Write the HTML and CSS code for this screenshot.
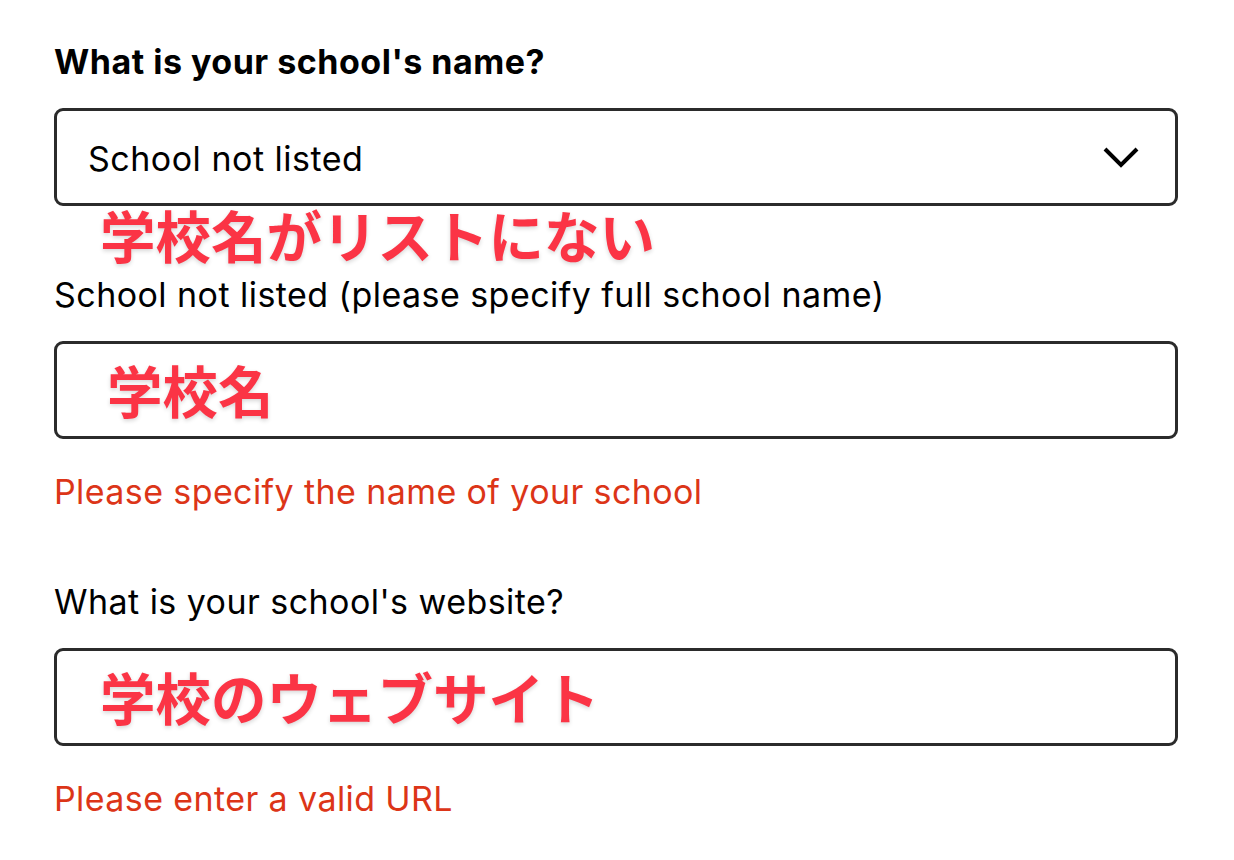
FILE: index.html
```html
<!DOCTYPE html>
<html lang="en">
<head>
<meta charset="utf-8">
<title>School details</title>
<link rel="stylesheet" href="styles.css">
</head>
<body>
<main class="form">
  <section class="field">
    <label class="label label--bold">What is your school's name?</label>
    <div class="control control--select">
      <span class="value">School not listed</span>
      <svg class="chevron" width="36" height="22" viewBox="0 0 36 22" aria-hidden="true">
        <polyline points="2,3 18,19 34,3" fill="none" stroke="#000" stroke-width="4"/>
      </svg>
    </div>
    <div class="note note--below">学校名がリストにない</div>
  </section>

  <section class="field field--other">
    <label class="label">School not listed (please specify full school name)</label>
    <div class="control">
      <span class="note note--inside note--indent">学校名</span>
    </div>
    <p class="error">Please specify the name of your school</p>
  </section>

  <section class="field field--website">
    <label class="label">What is your school's website?</label>
    <div class="control">
      <span class="note note--inside">学校のウェブサイト</span>
    </div>
    <p class="error">Please enter a valid URL</p>
  </section>
</main>
</body>
</html>
```

FILE: styles.css
```css
html, body {
  margin: 0;
  padding: 0;
  background: #ffffff;
}

body {
  font-family: Inter, "Liberation Sans", Arial, sans-serif;
  color: #000000;
}

.form {
  width: 1124px;
  padding: 40px 0 0 54px;
  display: flex;
  flex-direction: column;
}

.field {
  display: flex;
  flex-direction: column;
}

.field--website {
  margin-top: 66px;
}

.label {
  display: block;
  font-size: 34px;
  line-height: 44px;
  letter-spacing: 0.45px;
  font-weight: 400;
  margin: 0 0 24px 0;
}

.field--other .label {
  margin-top: 12px;
}

.label--bold {
  font-weight: 700;
  letter-spacing: 0.5px;
}

.control {
  box-sizing: border-box;
  height: 98px;
  border: 3px solid #2b2b2b;
  border-radius: 9px;
  display: flex;
  align-items: flex-start;
}

.control--select {
  align-items: center;
  justify-content: space-between;
}

.value {
  font-size: 34px;
  line-height: 44px;
  letter-spacing: 0.5px;
  padding: 4px 0 0 31px;
}

.chevron {
  display: block;
  margin-right: 36px;
}

.note {
  font-family: "Noto Sans CJK JP", "Noto Sans CJK SC", sans-serif;
  font-weight: 700;
  font-size: 55.5px;
  line-height: 54px;
  color: #fb3445;
  text-shadow: 0 2px 4px rgba(0, 0, 0, 0.16);
}

.note--below {
  padding: 1px 0 0 46px;
}

.note--inside {
  padding: 18px 0 0 43px;
}

.note--indent {
  padding-left: 50px;
}

.error {
  margin: 31px 0 0 0;
  font-size: 34px;
  line-height: 44px;
  letter-spacing: 0.4px;
  color: #dc3518;
}
```
